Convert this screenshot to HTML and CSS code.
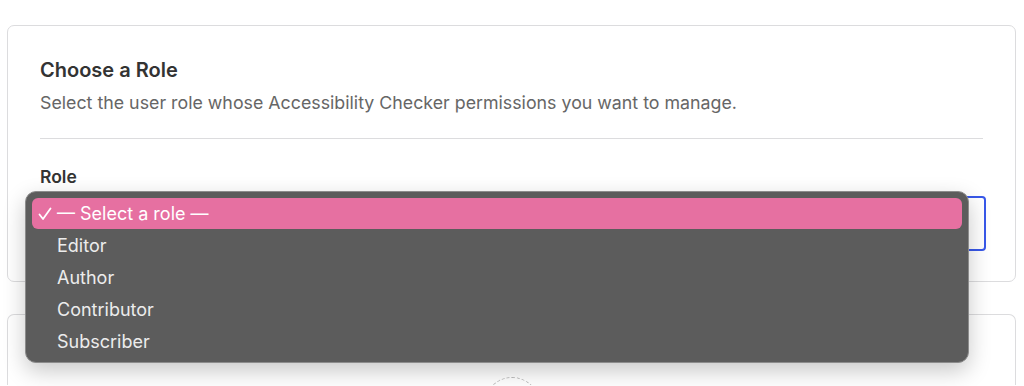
FILE: index.html
```html
<!DOCTYPE html>
<html lang="en">
<head>
    <meta charset="UTF-8">
    <meta name="viewport" content="width=device-width, initial-scale=1.0">
    <title>Role Permissions</title>
    <link rel="stylesheet" href="styles.css">
</head>
<body>

    <section class="card role-card">
        <h2>Choose a Role</h2>
        <p class="card-desc">Select the user role whose Accessibility Checker permissions you want to manage.</p>
        <hr class="divider">

        <label class="field-label" for="role-select">Role</label>
        <div class="select-wrap">
            <div class="select-box" id="role-select"></div>

            <!-- Menu natif ouvert -->
            <ul class="role-menu">
                <li class="role-option selected">
                    <svg class="check" width="14" height="14" viewBox="0 0 14 14"><polyline points="1.5,7.5 5,12 12.5,1.5" fill="none" stroke="#fff" stroke-width="1.8" stroke-linecap="round" stroke-linejoin="round"/></svg>
                    — Select a role —
                </li>
                <li class="role-option">Editor</li>
                <li class="role-option">Author</li>
                <li class="role-option">Contributor</li>
                <li class="role-option">Subscriber</li>
            </ul>
        </div>
    </section>

    <section class="card empty-card">
        <div class="empty-circle"></div>
    </section>

</body>
</html>
```

FILE: styles.css
```css
body {
    font-family: Inter, "Open Sans", sans-serif;
    margin: 0;
    padding: 25px 8px 0 7px;
    background-color: #fff;
    color: #333;
    overflow: hidden;
    height: 386px;
    box-sizing: border-box;
}

.card {
    background-color: #fff;
    border: 1px solid #dcdcde;
    border-radius: 7px;
}

.role-card {
    padding: 31px 32px 30px 32px;
    height: 194px;
}

.role-card h2 {
    margin: 0;
    font-size: 20px;
    font-weight: 600;
    color: #333;
    line-height: 26px;
}

.card-desc {
    margin: 8px 0 0;
    font-size: 17.8px;
    color: #666;
    line-height: 24px;
}

.divider {
    border: none;
    border-top: 1px solid #dcdcde;
    margin: 23px 0 27px;
}

.field-label {
    display: block;
    font-size: 17.5px;
    font-weight: 600;
    color: #333;
    line-height: 22px;
}

.select-wrap {
    position: relative;
    margin-top: 8px;
}

.select-box {
    height: 51px;
    border: 2px solid #3858e9;
    border-radius: 4px;
    margin-right: -3px;
}

.role-menu {
    position: absolute;
    left: -15px;
    top: -5px;
    width: 930px;
    margin: 0;
    padding: 6px 6px 5px;
    list-style: none;
    background-color: #5c5c5c;
    border: 1px solid #8c8c8c;
    border-radius: 11px;
    box-shadow: 0 8px 22px rgba(0, 0, 0, 0.22);
}

.role-option {
    position: relative;
    height: 32px;
    line-height: 34px;
    padding-left: 25px;
    font-size: 18px;
    color: #ececec;
    border-radius: 6px;
}

.role-option.selected {
    background-color: #e670a1;
    color: #fff;
    height: 31px;
    line-height: 32px;
}

.check {
    position: absolute;
    left: 6px;
    top: 9px;
}

.empty-card {
    margin-top: 32px;
    height: 70px;
    border-bottom: none;
    border-radius: 7px 7px 0 0;
    overflow: hidden;
    display: flex;
    justify-content: center;
}

.empty-circle {
    flex-shrink: 0;
    width: 54px;
    height: 54px;
    margin-top: 62px;
    border: 1px dashed #bbb;
    border-radius: 50%;
}
```
